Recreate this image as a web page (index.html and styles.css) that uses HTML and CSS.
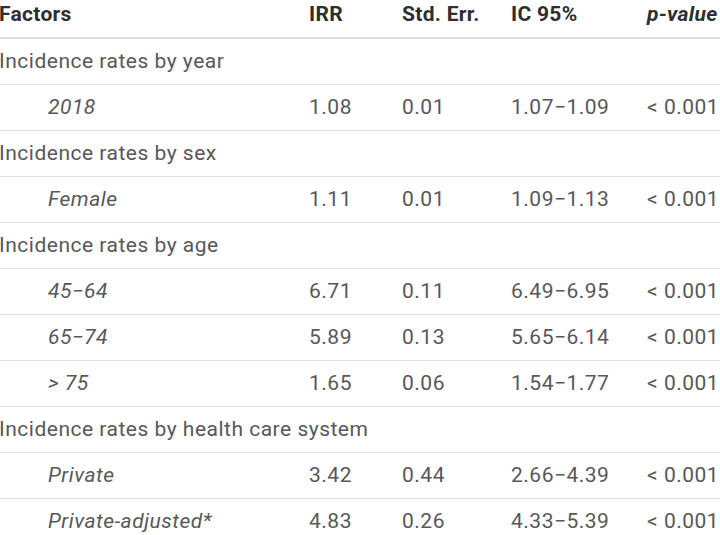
FILE: index.html
```html
<!DOCTYPE html>
<html lang="en">
<head>
<meta charset="utf-8">
<title>Incidence rate ratios</title>
<link rel="stylesheet" href="styles.css">
</head>
<body>
<div class="table">
  <div class="row head">
    <div class="cell">Factors</div>
    <div class="cell">IRR</div>
    <div class="cell">Std. Err.</div>
    <div class="cell">IC 95%</div>
    <div class="cell pv">p-value</div>
  </div>
  <div class="row group"><div class="cell span">Incidence rates by year</div></div>
  <div class="row">
    <div class="cell sub">2018</div><div class="cell">1.08</div><div class="cell">0.01</div><div class="cell">1.07−1.09</div><div class="cell">&lt; 0.001</div>
  </div>
  <div class="row group"><div class="cell span">Incidence rates by sex</div></div>
  <div class="row">
    <div class="cell sub">Female</div><div class="cell">1.11</div><div class="cell">0.01</div><div class="cell">1.09−1.13</div><div class="cell">&lt; 0.001</div>
  </div>
  <div class="row group"><div class="cell span">Incidence rates by age</div></div>
  <div class="row">
    <div class="cell sub">45−64</div><div class="cell">6.71</div><div class="cell">0.11</div><div class="cell">6.49−6.95</div><div class="cell">&lt; 0.001</div>
  </div>
  <div class="row">
    <div class="cell sub">65−74</div><div class="cell">5.89</div><div class="cell">0.13</div><div class="cell">5.65−6.14</div><div class="cell">&lt; 0.001</div>
  </div>
  <div class="row">
    <div class="cell sub">&gt; 75</div><div class="cell">1.65</div><div class="cell">0.06</div><div class="cell">1.54−1.77</div><div class="cell">&lt; 0.001</div>
  </div>
  <div class="row group"><div class="cell span">Incidence rates by health care system</div></div>
  <div class="row">
    <div class="cell sub">Private</div><div class="cell">3.42</div><div class="cell">0.44</div><div class="cell">2.66−4.39</div><div class="cell">&lt; 0.001</div>
  </div>
  <div class="row">
    <div class="cell sub">Private-adjusted*</div><div class="cell">4.83</div><div class="cell">0.26</div><div class="cell">4.33−5.39</div><div class="cell">&lt; 0.001</div>
  </div>
</div>
</body>
</html>
```

FILE: styles.css
```css
html, body {
  margin: 0;
  padding: 0;
  background: #ffffff;
  overflow: hidden;
}

.table {
  width: 760px;
  margin-left: -1px;
  font-family: Roboto, "Liberation Sans", sans-serif;
  font-size: 21px;
  letter-spacing: 0.5px;
  color: #585858;
}

.row {
  display: grid;
  grid-template-columns: 310px 93px 109px 136px 112px;
  height: 45px;
  align-items: center;
  border-bottom: 1px solid #e2e2e2;
  white-space: nowrap;
}

.row.head {
  height: 37px;
  align-items: start;
  border-bottom: 2px solid #dcdcdc;
  color: #2e2e2e;
  font-weight: 700;
  letter-spacing: 0.3px;
}

.row.head .cell {
  line-height: 28px;
}

.pv {
  font-style: italic;
}

.cell {
  line-height: 45px;
}

.cell.span {
  grid-column: 1 / -1;
}

.cell.sub {
  font-style: italic;
  padding-left: 49px;
}
```
